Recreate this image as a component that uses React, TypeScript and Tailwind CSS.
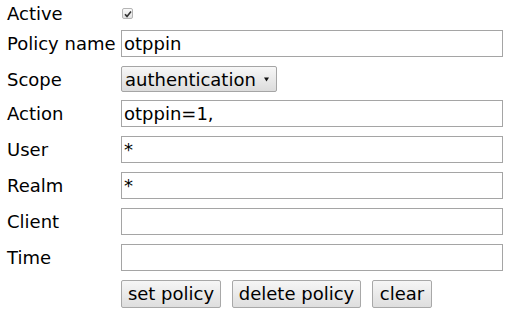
import React from 'react';

const rows = [
  { label: 'User', value: '*' },
  { label: 'Realm', value: '*' },
  { label: 'Client', value: '' },
  { label: 'Time', value: '' },
];

function Field({ value }: { value: string }) {
  return (
    <div className="w-[382px] h-[27px] border border-[#a5a5a5] bg-white flex items-center pl-[2px] text-black">
      {value}
    </div>
  );
}

function Btn({ label, width }: { label: string; width: string }) {
  return (
    <button
      className={`${width} h-[28px] border border-[#a8a8a8] rounded-[2px] bg-gradient-to-b from-[#f6f6f6] to-[#dedede] text-black flex items-center justify-center leading-none`}
    >
      {label}
    </button>
  );
}

export default function App() {
  return (
    <div
      className="w-[511px] h-[325px] bg-white text-[18px] text-black"
      style={{ fontFamily: '"DejaVu Sans", sans-serif' }}
    >
      <div className="flex flex-col pl-[7px]">
        {/* active */}
        <div className="flex items-center h-[27px]">
          <span className="w-[114px]">Active</span>
          <span className="ml-[1px] w-[11px] h-[11px] border border-[#b4b4b4] rounded-[2px] bg-gradient-to-b from-[#fafafa] to-[#e2e2e2] flex items-center justify-center">
            <svg width="8" height="8" viewBox="0 0 8 8">
              <path d="M1 4.2 L3 6.4 L7 1.4" stroke="#333" strokeWidth="1.6" fill="none" />
            </svg>
          </span>
        </div>

        <div className="flex items-center h-[27px] mt-[3px]">
          <span className="w-[114px]">Policy name</span>
          <Field value="otppin" />
        </div>

        <div className="flex items-center h-[26px] mt-[9px]">
          <span className="w-[114px]">Scope</span>
          <div className="w-[156px] h-[26px] border border-[#a5a5a5] rounded-[2px] bg-gradient-to-b from-[#f7f7f7] to-[#dcdcdc] flex items-center pl-[3px] pr-[7px] text-black">
            <span>authentication</span>
            <svg className="ml-auto" width="5" height="5" viewBox="0 0 5 5">
              <path d="M0 0.5 L5 0.5 L2.5 4.5 Z" fill="#111" />
            </svg>
          </div>
        </div>

        <div className="flex items-center h-[27px] mt-[8px]">
          <span className="w-[114px]">Action</span>
          <Field value="otppin=1," />
        </div>

        {rows.map((r) => (
          <div key={r.label} className="flex items-center h-[27px] mt-[9px]">
            <span className="w-[114px]">{r.label}</span>
            <Field value={r.value} />
          </div>
        ))}

        <div className="flex items-center gap-[11px] h-[28px] mt-[9px] pl-[114px]">
          <Btn label="set policy" width="w-[100px]" />
          <Btn label="delete policy" width="w-[129px]" />
          <Btn label="clear" width="w-[60px]" />
        </div>
      </div>
    </div>
  );
}
